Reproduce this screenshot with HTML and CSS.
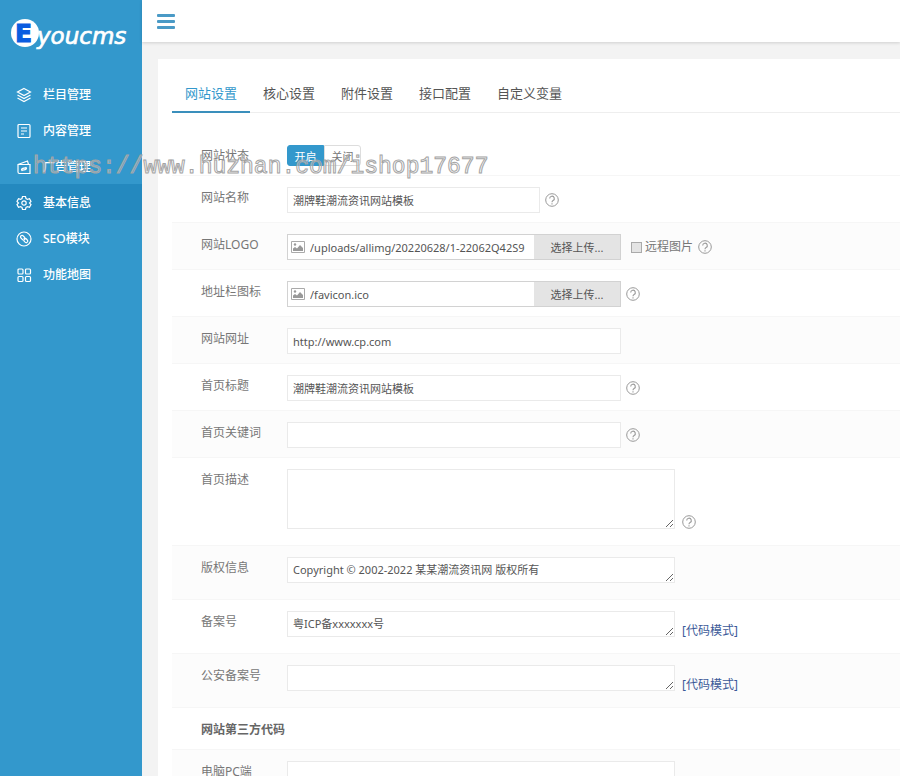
FILE: index.html
```html
<!DOCTYPE html>
<html lang="zh-CN">
<head>
    <meta charset="UTF-8">
    <meta name="viewport" content="width=device-width, initial-scale=1.0">
    <title>Eyoucms</title>
    <link rel="stylesheet" href="styles.css">
</head>
<body>
    <!-- shared icons -->
    <svg class="sprite" aria-hidden="true">
        <symbol id="help" viewBox="0 0 14 14">
            <circle cx="7" cy="7" r="6.3" fill="none" stroke="currentColor"/>
            <path d="M4.7 5.500a2.300 2.300 0 1 1 3.400 2c-.8.5-1.100.8-1.100 1.700M7 10.200v1.200" fill="none" stroke="currentColor" stroke-width="1.1"/>
        </symbol>
        <symbol id="picture" viewBox="0 0 14 12">
            <path d="M.5.5h13v11H.5z" fill="#fff" stroke="#aaa"/>
            <path d="M2 10V7.500l2-1.500 2 1.500 3-3.500 3 3v3z" fill="#999"/>
            <circle cx="4" cy="3.500" r="1.200" fill="#999"/>
        </symbol>
    </svg>

    <div class="layout">
        <!-- Sidebar -->
        <aside class="sidebar">
            <a href="#" class="logo" aria-label="Eyoucms">
                <svg width="120" height="36" viewBox="0 0 120 36">
                    <circle cx="14" cy="17" r="14" fill="#fff"/>
                    <text class="logo-e" x="4" y="26">E</text>
                    <text class="logo-text" x="26" y="28">youcms</text>
                </svg>
            </a>
            <nav class="menu">
                <a href="#">
                    <svg class="icon" viewBox="0 0 16 16"><path d="M8 1.500l6.500 3.500L8 8.500 1.500 5zM1.500 8L8 11.500 14.500 8M1.500 11L8 14.500l6.500-3.500"/></svg>
                    栏目管理
                </a>
                <a href="#">
                    <svg class="icon" viewBox="0 0 16 16"><rect x="2" y="1.500" width="12" height="13" rx="1"/><path d="M5 5h6M5 8h6M5 11h3"/></svg>
                    内容管理
                </a>
                <a href="#">
                    <svg class="icon" viewBox="0 0 16 16"><path d="M2 5.500h12v9H3.500A1.500 1.500 0 0 1 2 13zM2 5.500L11.500 2l1 3.500M5.500 11c0-3 4-1 5-3M10.500 9c0 3-4 1-5 3"/></svg>
                    广告管理
                </a>
                <a href="#" class="active">
                    <svg class="icon" viewBox="0 0 16 16"><path d="M6.500 1.500h3l.5 2 1.500.9 2-.6 1.500 2.600-1.500 1.600 1.500 1.600-1.500 2.600-2-.6-1.500.9-.5 2h-3l-.5-2-1.500-.9-2 .6L1 9.600 2.500 8 1 6.400l1.500-2.600 2 .6L6 3.500z"/><circle cx="8" cy="8" r="2.200"/></svg>
                    基本信息
                </a>
                <a href="#">
                    <svg class="icon" viewBox="0 0 16 16"><circle cx="8" cy="8" r="7"/><path d="M5 4.800a1.500 1.500 0 0 1 2.200 0l1.500 1.700a1.500 1.500 0 0 1-2.200 2.100L5 7a1.500 1.500 0 0 1 0-2.200zM7.800 8a1.500 1.500 0 0 1 2.100-.5l1.400 1.500a1.500 1.500 0 0 1-2.200 2.200L7.700 9.700"/></svg>
                    SEO模块
                </a>
                <a href="#">
                    <svg class="icon" viewBox="0 0 16 16"><rect x="2" y="2" width="5" height="5" rx="1"/><rect x="9.500" y="2" width="5" height="5" rx="1"/><rect x="2" y="9.500" width="5" height="5" rx="1"/><rect x="9.500" y="9.500" width="5" height="5" rx="1"/></svg>
                    功能地图
                </a>
            </nav>
        </aside>

        <div class="main">
            <header class="topbar">
                <button type="button" class="toggle" aria-label="菜单"><span></span><span></span><span></span></button>
            </header>

            <div class="card">
                <nav class="tabs">
                    <a href="#" class="active">网站设置</a>
                    <a href="#">核心设置</a>
                    <a href="#">附件设置</a>
                    <a href="#">接口配置</a>
                    <a href="#">自定义变量</a>
                </nav>

                <!-- Site settings -->
                <form class="form">
                    <div class="row">
                        <span class="name">网站状态</span>
                        <div class="switch">
                            <button type="button" class="on">开启</button>
                            <button type="button">关闭</button>
                        </div>
                    </div>
                    <div class="row">
                        <label class="name" for="web_name">网站名称</label>
                        <div class="field">
                            <input type="text" id="web_name" class="input small" value="潮牌鞋潮流资讯网站模板">
                            <svg class="help"><use href="#help"/></svg>
                        </div>
                    </div>
                    <div class="row">
                        <label class="name" for="web_logo">网站LOGO</label>
                        <div class="field">
                            <div class="upload">
                                <svg class="picture"><use href="#picture"/></svg>
                                <input type="text" id="web_logo" value="/uploads/allimg/20220628/1-22062Q42S9">
                                <button type="button">选择上传...</button>
                            </div>
                            <label class="remote"><input type="checkbox">远程图片</label>
                            <svg class="help"><use href="#help"/></svg>
                        </div>
                    </div>
                    <div class="row">
                        <label class="name" for="web_ico">地址栏图标</label>
                        <div class="field">
                            <div class="upload">
                                <svg class="picture"><use href="#picture"/></svg>
                                <input type="text" id="web_ico" value="/favicon.ico">
                                <button type="button">选择上传...</button>
                            </div>
                            <svg class="help"><use href="#help"/></svg>
                        </div>
                    </div>
                    <div class="row">
                        <label class="name" for="web_url">网站网址</label>
                        <div class="field">
                            <input type="text" id="web_url" class="input" value="http://www.cp.com">
                        </div>
                    </div>
                    <div class="row">
                        <label class="name" for="web_title">首页标题</label>
                        <div class="field">
                            <input type="text" id="web_title" class="input" value="潮牌鞋潮流资讯网站模板">
                            <svg class="help"><use href="#help"/></svg>
                        </div>
                    </div>
                    <div class="row">
                        <label class="name" for="web_keywords">首页关键词</label>
                        <div class="field">
                            <input type="text" id="web_keywords" class="input">
                            <svg class="help"><use href="#help"/></svg>
                        </div>
                    </div>
                    <div class="row area">
                        <label class="name" for="web_description">首页描述</label>
                        <div class="field">
                            <textarea id="web_description" class="tall"></textarea>
                            <svg class="help"><use href="#help"/></svg>
                        </div>
                    </div>
                    <div class="row area">
                        <label class="name" for="web_copyright">版权信息</label>
                        <div class="field">
                            <textarea id="web_copyright">Copyright © 2002-2022 某某潮流资讯网 版权所有</textarea>
                        </div>
                    </div>
                    <div class="row area">
                        <label class="name" for="web_recordnum">备案号</label>
                        <div class="field">
                            <textarea id="web_recordnum">粤ICP备xxxxxxx号</textarea>
                            <a href="#" class="mode">[代码模式]</a>
                        </div>
                    </div>
                    <div class="row area">
                        <label class="name" for="web_garecordnum">公安备案号</label>
                        <div class="field">
                            <textarea id="web_garecordnum"></textarea>
                            <a href="#" class="mode">[代码模式]</a>
                        </div>
                    </div>
                    <div class="row">
                        <h3 class="name">网站第三方代码</h3>
                    </div>
                    <div class="row area">
                        <label class="name" for="web_pc">电脑PC端</label>
                        <div class="field">
                            <textarea id="web_pc" class="tall"></textarea>
                        </div>
                    </div>
                </form>
            </div>
        </div>
    </div>

    <div class="watermark">https://www.huzhan.com/ishop17677</div>
</body>
</html>
```
FILE: styles.css
```css
* {
    box-sizing: border-box;
}
body {
    margin: 0;
    font: 12px/20px "Noto Sans", "Noto Sans CJK SC", sans-serif;
    color: #777;
    background-color: #f3f3f3;
}
a {
    text-decoration: none;
}
input, textarea, button {
    font-family: inherit;
    font-size: 11px;
    color: #555;
}
.sprite {
    display: none;
}
.layout {
    display: flex;
    height: 100vh;
    overflow: hidden;
}

/* sidebar */
.sidebar {
    flex: 0 0 142px;
    background-color: #3398cc;
}
.logo {
    display: block;
    height: 76px;
    padding: 16px 11px;
}
.logo svg {
    display: block;
}
.logo-e {
    font: bold 25px "DejaVu Sans", sans-serif;
    fill: #0b5ce0;
    stroke: #0b5ce0;
}
.logo-text {
    font: italic 23px "DejaVu Sans", sans-serif;
    fill: #fff;
    stroke: #fff;
    stroke-width: 0.7;
}
.menu a {
    display: flex;
    align-items: center;
    gap: 11px;
    height: 36px;
    padding: 2px 0 0 16px;
    color: #fff;
    font-weight: 500;
}
.menu a.active {
    background-color: #2489bf;
}
.icon {
    width: 16px;
    height: 16px;
    fill: none;
    stroke: #fff;
    stroke-width: 1.2;
}

/* top bar */
.main {
    flex: 1;
    min-width: 0;
}
.topbar {
    display: flex;
    align-items: center;
    height: 42px;
    padding-left: 15px;
    background-color: #fff;
    box-shadow: 0 1px 3px rgba(0, 0, 0, 0.15);
}
.toggle {
    display: flex;
    flex-direction: column;
    gap: 3px;
    width: 18px;
    padding: 0;
    border: none;
    background: none;
    cursor: pointer;
}
.toggle span {
    height: 3px;
    border-radius: 1px;
    background-color: #4a9ac6;
}

/* card */
.card {
    margin: 17px 0 0 16px;
    padding: 16px 0 0 14px;
    background-color: #fff;
}
.tabs {
    display: flex;
    border-bottom: 1px solid #eee;
}
.tabs a {
    height: 38px;
    margin-bottom: -1px;
    padding: 0 13px;
    font-size: 13px;
    line-height: 36px;
    color: #555;
}
.tabs a.active {
    color: #3398cc;
    border-bottom: 2px solid #3a8fbc;
}

/* form rows */
.form {
    padding-top: 21px;
}
.row {
    display: flex;
    padding: 11px 0 9px 29px;
    border-bottom: 1px solid #f6f6f6;
}
.row:nth-child(odd) {
    background-color: #fcfcfc;
}
.row:first-child {
    background-color: #fff;
}
.row.area {
    padding-bottom: 16px;
}
.row .name {
    flex: 0 0 86px;
    padding-top: 1px;
}
h3.name {
    margin: 0;
    font-size: 12px;
    color: #666;
    white-space: nowrap;
}
.field {
    display: flex;
    align-items: center;
    gap: 5px;
}
.area .field {
    align-items: flex-end;
    gap: 7px;
}
.input, .upload, textarea {
    height: 26px;
    border: 1px solid #eaeaea;
    background-color: #fff;
}
.input {
    width: 334px;
    padding: 0 5px;
}
.input.small {
    width: 253px;
}
textarea {
    display: block;
    width: 388px;
    min-height: 26px;
    padding: 2px 5px;
    line-height: 20px;
    overflow: hidden;
    resize: both;
}
textarea.tall {
    height: 60px;
}
.help {
    width: 14px;
    height: 14px;
    color: #999;
}
.mode {
    line-height: 12px;
    color: #3b5998;
}

/* upload box */
.upload {
    display: flex;
    align-items: center;
    width: 334px;
    padding-left: 3px;
    border-color: #d2d2d2;
}
.picture {
    width: 14px;
    height: 12px;
    margin-right: 5px;
}
.upload input {
    flex: 1;
    min-width: 0;
    padding: 0;
    border: none;
}
.upload button {
    width: 86px;
    height: 24px;
    padding: 0;
    border: none;
    background-color: #e4e4e4;
}
.remote {
    display: flex;
    align-items: center;
    gap: 3px;
    margin-left: 5px;
}
.remote input {
    appearance: none;
    width: 11px;
    height: 11px;
    margin: 0;
    border: 1px solid #aaa;
    background-color: #e4e4e4;
}
.remote input:checked {
    background-color: #3398cc;
}

/* on / off */
.switch {
    display: flex;
    height: 21px;
}
.switch button {
    width: 37px;
    padding: 0;
    border: 1px solid #ddd;
    border-radius: 0 3px 3px 0;
    background-color: #fff;
    color: #777;
}
.switch .on {
    border-color: #3398cc;
    border-radius: 3px 0 0 3px;
    background-color: #3398cc;
    color: #fff;
}

.watermark {
    position: absolute;
    top: 152px;
    left: 33px;
    font: 23px/30px "Liberation Mono", monospace;
    color: rgba(255, 255, 255, 0.3);
    -webkit-text-stroke: 1px #a4a4a4;
    pointer-events: none;
}
```
